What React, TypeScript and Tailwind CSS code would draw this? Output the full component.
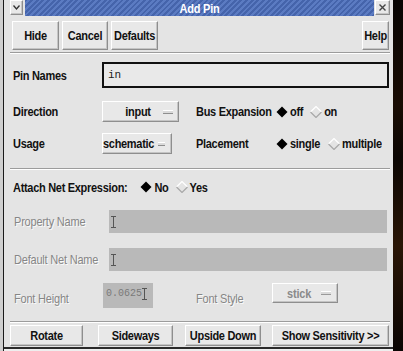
import type { ReactNode } from "react";

const font = "font-['Liberation_Sans',Arial,sans-serif]";
const raised =
  "border border-t-white border-l-white border-b-[#8e8e8e] border-r-[#8e8e8e] bg-[#e8e8e8] shadow-[inset_-1px_-1px_0_#c4c4c4]";
const tall = "inline-block scale-y-[1.18]";

function Btn({ w, h, children, className = "" }: { w: string; h: string; children: ReactNode; className?: string }) {
  return (
    <div className={`${raised} ${w} ${h} flex shrink-0 items-center justify-center text-[11px] font-bold tracking-[-0.3px] text-[#111] ${className}`}>
      <span className={tall}>{children}</span>
    </div>
  );
}

function Etch({ className = "" }: { className?: string }) {
  return <div className={`h-[2px] shrink-0 border-t border-t-[#9c9c9c] border-b border-b-white ${className}`} />;
}

function Diamond({ on }: { on: boolean }) {
  return (
    <svg width="12" height="12" viewBox="0 0 12 12" className="shrink-0">
      {on ? (
        <polygon points="6,0.5 11.5,6 6,11.5 0.5,6" fill="#000" />
      ) : (
        <>
          <polyline points="0.5,6 6,0.5 11.5,6" fill="none" stroke="#ffffff" strokeWidth="1.2" />
          <polyline points="0.5,6 6,11.5 11.5,6" fill="none" stroke="#a8a8a8" strokeWidth="1.2" />
        </>
      )}
    </svg>
  );
}

function Option({ w, label, left }: { w: string; label: string; left?: boolean }) {
  return (
    <div className={`${raised} ${w} flex h-[21px] shrink-0 items-center gap-[4px] ${left ? "pl-[0px] pr-[6px]" : "pl-[14px] pr-[5px]"}`}>
      <span className={`${left ? "" : "flex-1 text-center"} text-[11px] font-bold tracking-[-0.3px] text-[#111]`}>
        <span className={tall}>{label}</span>
      </span>
      <span className="ml-auto h-[4px] w-[10px] border-t border-t-white border-b border-b-[#8e8e8e] bg-[#dadada]" />
    </div>
  );
}

function Cursor() {
  return (
    <svg width="5" height="12" viewBox="0 0 5 12" className="shrink-0">
      <path d="M0 0.5 H5 M2.5 0.5 V11.5 M0 11.5 H5" stroke="#555" strokeWidth="1" fill="none" />
    </svg>
  );
}

function T({ className = "", children }: { className?: string; children: ReactNode }) {
  return (
    <span className={`text-[11px] font-bold tracking-[-0.3px] text-[#111] ${className}`}>
      <span className={tall}>{children}</span>
    </span>
  );
}

function Dim({ className = "", children }: { className?: string; children: ReactNode }) {
  return (
    <span className={`text-[11px] tracking-[-0.2px] text-[#868686] [text-shadow:1px_1px_0_#fafafa] ${className}`}>
      <span className={tall}>{children}</span>
    </span>
  );
}

export default function App() {
  return (
    <div className={`${font} flex h-[351px] w-[403px] overflow-hidden bg-[#e2e2e2]`}>
      <div className="w-[3px] shrink-0 bg-[#cfcfcf]" />
      <div className="w-[1px] shrink-0 bg-[#1a1a1a]" />

      <div className="flex w-[389px] shrink-0 flex-col bg-[#e4e4e4]">
        {/* title bar */}
        <div className="flex h-[16px] shrink-0 items-start pl-[6px] pr-[3px]">
          <div className={`${raised} flex h-[15px] w-[13px] items-center justify-center`}>
            <svg width="7" height="5" viewBox="0 0 7 5">
              <path d="M0.5 0.5 L3.5 4 L6.5 0.5" stroke="#333" strokeWidth="1.3" fill="none" />
            </svg>
          </div>
          <div className="ml-[2px] flex h-[16px] w-[349px] items-center justify-center bg-[repeating-linear-gradient(135deg,#4564ab_0px,#4564ab_2px,#5b7bc2_2px,#5b7bc2_4px)]">
            <span className="text-[11px] font-bold tracking-[-0.2px] text-white">
              <span className={tall}>Add Pin</span>
            </span>
          </div>
          <div className={`${raised} ml-[1px] flex h-[15px] w-[15px] items-center justify-center`}>
            <svg width="7" height="7" viewBox="0 0 7 7">
              <path d="M0.5 0.5 L6.5 6.5 M6.5 0.5 L0.5 6.5" stroke="#444" strokeWidth="1.4" />
            </svg>
          </div>
        </div>

        {/* toolbar */}
        <div className="mt-[5px] flex shrink-0 pl-[8px] pr-[4px]">
          <Btn w="w-[47px]" h="h-[29px]">Hide</Btn>
          <Btn w="w-[46px]" h="h-[29px]" className="ml-[3px]">Cancel</Btn>
          <Btn w="w-[47px]" h="h-[29px]" className="ml-[3px]">Defaults</Btn>
          <Btn w="w-[27px]" h="h-[29px]" className="ml-auto">Help</Btn>
        </div>
        <Etch className="ml-[6px] mr-[3px] mt-[2px]" />

        {/* pin names */}
        <div className="mt-[8px] flex h-[26px] shrink-0 items-center pl-[9px] pr-[4px]">
          <T className="w-[89px]">Pin Names</T>
          <div className="flex h-[26px] flex-1 items-center border-2 border-[#111] bg-[#e9e9e9] pl-[4px] font-['Liberation_Mono',monospace] text-[11px] text-[#222]">
            in
          </div>
        </div>

        {/* direction */}
        <div className="mt-[13px] flex h-[21px] shrink-0 items-center pl-[9px]">
          <T className="w-[89px]">Direction</T>
          <Option w="w-[77px]" label="input" />
          <T className="ml-[17px] w-[76px]">Bus Expansion</T>
          <div className="flex items-center pl-[4px]">
            <Diamond on />
            <T className="ml-[2px]">off</T>
            <span className="ml-[7px]"><Diamond on={false} /></span>
            <T className="ml-[2px]">on</T>
          </div>
        </div>

        {/* usage */}
        <div className="mt-[11px] flex h-[21px] shrink-0 items-center pl-[9px]">
          <T className="w-[89px]">Usage</T>
          <Option w="w-[70px]" label="schematic" left />
          <T className="ml-[24px] w-[76px]">Placement</T>
          <div className="flex items-center pl-[4px]">
            <Diamond on />
            <T className="ml-[2px]">single</T>
            <span className="ml-[8px]"><Diamond on={false} /></span>
            <T className="ml-[2px]">multiple</T>
          </div>
        </div>

        <Etch className="ml-[6px] mr-[3px] mt-[14px]" />

        {/* attach */}
        <div className="mt-[9px] flex h-[16px] shrink-0 items-center pl-[9px]">
          <T>Attach Net Expression:</T>
          <span className="ml-[13px]"><Diamond on /></span>
          <T className="ml-[2px]">No</T>
          <span className="ml-[7px]"><Diamond on={false} /></span>
          <T className="ml-[2px]">Yes</T>
        </div>

        {/* property name */}
        <div className="mt-[15px] flex h-[23px] shrink-0 items-center pl-[10px]">
          <Dim className="w-[95px]">Property Name</Dim>
          <div className="flex h-[23px] w-[278px] items-center bg-[#b9b9b9] pl-[2px]">
            <Cursor />
          </div>
        </div>

        {/* default net name */}
        <div className="mt-[15px] flex h-[23px] shrink-0 items-center pl-[10px]">
          <Dim className="w-[95px]">Default Net Name</Dim>
          <div className="flex h-[23px] w-[278px] items-center bg-[#b9b9b9] pl-[2px]">
            <Cursor />
          </div>
        </div>

        {/* font */}
        <div className="mt-[12px] flex h-[25px] shrink-0 items-start pl-[10px]">
          <Dim className="mt-[7px] w-[89px]">Font Height</Dim>
          <div className="flex h-[25px] w-[50px] items-center bg-[#b9b9b9] pl-[3px] pb-[4px] font-['Liberation_Mono',monospace] text-[10px] text-[#7a7a7a]">
            0.0625<Cursor />
          </div>
          <Dim className="ml-[43px] mt-[7px] w-[76px]">Font Style</Dim>
          <div className={`${raised} flex h-[20px] w-[66px] items-center pl-[14px] pr-[6px]`}>
            <span className="flex-1 text-[11px] font-bold tracking-[-0.2px] text-[#8a8a8a]">
              <span className={tall}>stick</span>
            </span>
            <span className="h-[4px] w-[10px] border-t border-t-white border-b border-b-[#9a9a9a] bg-[#dadada]" />
          </div>
        </div>

        <Etch className="ml-[6px] mr-[3px] mt-[13px]" />

        {/* bottom buttons */}
        <div className="mt-[2px] flex shrink-0 pl-[6px]">
          <Btn w="w-[73px]" h="h-[21px]">Rotate</Btn>
          <Btn w="w-[75px]" h="h-[21px]" className="ml-[15px]">Sideways</Btn>
          <Btn w="w-[76px]" h="h-[21px]" className="ml-[12px]">Upside Down</Btn>
          <Btn w="w-[117px]" h="h-[21px]" className="ml-[11px]">Show Sensitivity &gt;&gt;</Btn>
        </div>

        <div className="mt-[1px] h-[2px] shrink-0 bg-[#2a2a2a]" />
        <div className="flex-1 bg-[#eeeeee]" />
      </div>

      <div className="flex-1 bg-[linear-gradient(180deg,#080503_0%,#1a0d04_30%,#0b0603_45%,#2a1606_70%,#0a0503_100%)]" />
    </div>
  );
}
